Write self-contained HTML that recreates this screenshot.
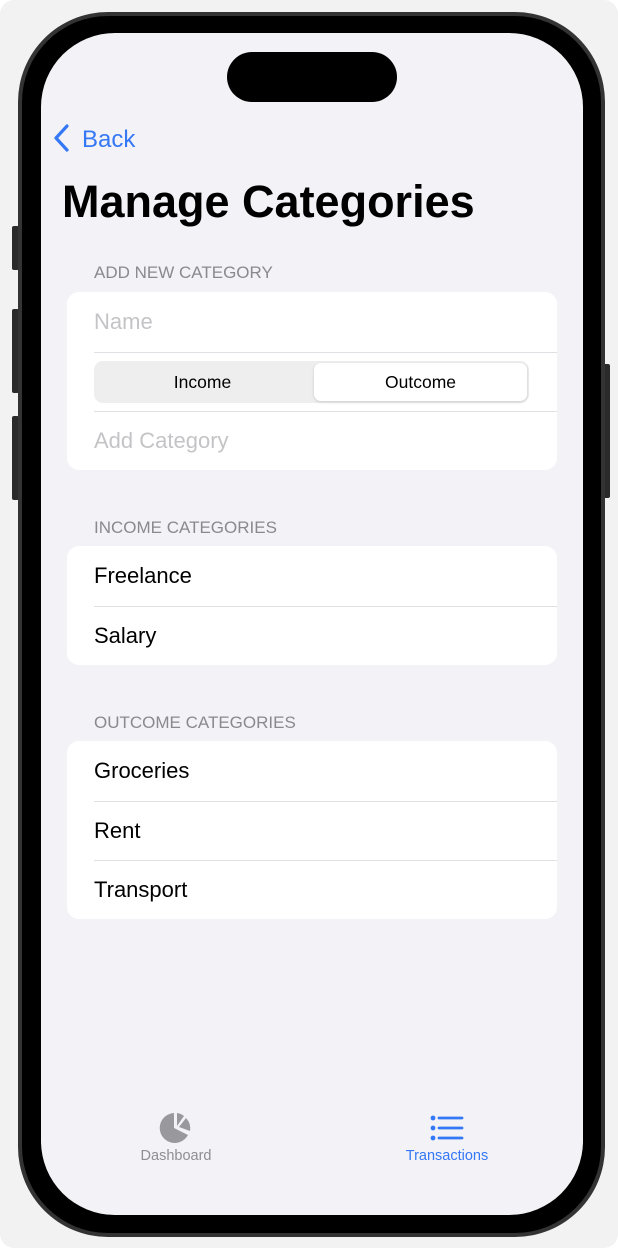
<!DOCTYPE html>
<html><head><meta charset="utf-8"><style>
*{margin:0;padding:0;box-sizing:border-box}
body{width:618px;height:1248px;background:#fff;font-family:"Liberation Sans",sans-serif;position:relative;overflow:hidden}
.bg{position:absolute;left:0;top:0;width:618px;height:1248px;background:#f2f2f2;border-radius:14px}
.btn{position:absolute;background:#2a2a2a;border-radius:2px}
.outer{position:absolute;left:18px;top:12px;width:587px;height:1225px;border-radius:90px;background:#333}
.black{position:absolute;left:22px;top:16px;width:579px;height:1217px;border-radius:86px;background:#000}
.screen{position:absolute;left:41px;top:33px;width:542px;height:1182px;border-radius:74px;background:#f2f2f7;overflow:hidden}
.island{position:absolute;left:186px;top:19px;width:170px;height:50px;border-radius:25px;background:#000}
.back{position:absolute;left:12px;top:91px;color:#3478f6;font-size:24px}
.title{position:absolute;left:21px;top:143px;font-size:45px;font-weight:bold;color:#000;letter-spacing:0px}
.hdr{position:absolute;left:53px;font-size:17px;color:#8a8a8e}
.card{position:absolute;left:26px;width:490px;background:#fff;border-radius:12px}
.row{height:59.5px;line-height:59.5px;padding-left:27px;font-size:22px;color:#000;position:relative}
.row+.row:before{content:"";position:absolute;left:27px;right:0;top:0;height:1px;background:#e0e0e4}
.ph{color:#c4c4c7}
.seg{position:absolute;left:27px;top:9px;width:435px;height:42px;background:#eeeeef;border-radius:9px}
.seg div{position:absolute;top:0;height:42px;line-height:42px;text-align:center;font-size:17.5px;color:#000}
.sel{left:220px;width:213px;top:2px!important;height:38px!important;line-height:38px!important;background:#fff;border-radius:7px;box-shadow:0 1px 3px rgba(0,0,0,.15)}
.tab{position:absolute;font-size:14.5px;text-align:center}
</style></head><body>
<div class="bg"></div>
<div class="btn" style="left:12px;top:226px;width:7px;height:44px"></div>
<div class="btn" style="left:12px;top:309px;width:7px;height:84px"></div>
<div class="btn" style="left:12px;top:416px;width:7px;height:84px"></div>
<div class="btn" style="left:603px;top:364px;width:7px;height:134px"></div>
<div class="outer"></div><div class="black"></div>
<div class="screen">
<div class="island"></div>
<div class="back"><svg width="18" height="28" viewBox="0 0 18 28" style="vertical-align:-5px;margin-right:11px"><path d="M14 2 L3 14 L14 26" fill="none" stroke="#3478f6" stroke-width="3.2" stroke-linecap="round" stroke-linejoin="round"/></svg>Back</div>
<div class="title">Manage Categories</div>
<div class="hdr" style="top:230px">ADD NEW CATEGORY</div>
<div class="card" style="top:259px;height:178px">
<div class="row ph">Name</div>
<div class="row"><div class="seg"><div style="left:0;width:217px">Income</div><div class="sel">Outcome</div></div></div>
<div class="row ph">Add Category</div>
</div>
<div class="hdr" style="top:485px">INCOME CATEGORIES</div>
<div class="card" style="top:513px;height:119px">
<div class="row">Freelance</div><div class="row">Salary</div>
</div>
<div class="hdr" style="top:680px">OUTCOME CATEGORIES</div>
<div class="card" style="top:708px;height:178px">
<div class="row">Groceries</div><div class="row">Rent</div><div class="row">Transport</div>
</div>
<div class="tab" style="left:80px;top:1081px;width:110px;color:#8e8e93">
<svg width="34" height="34" viewBox="0 0 34 34" style="display:block;margin:-3px auto 3px"><path d="M15 2 A15 15 0 1 0 29 24 L15 17 Z" fill="#98989d"/><path d="M18 2 A15 15 0 0 1 25 5 L18 15 Z" fill="#98989d"/><path d="M27 7 A15 15 0 0 1 31 20 L20 16 Z" fill="#98989d"/></svg>Dashboard</div>
<div class="tab" style="left:351px;top:1081px;width:110px;color:#3478f6">
<svg width="34" height="34" viewBox="0 0 34 34" style="display:block;margin:-3px auto 3px"><circle cx="3" cy="7" r="2.4" fill="#3478f6"/><circle cx="3" cy="17" r="2.4" fill="#3478f6"/><circle cx="3" cy="27" r="2.4" fill="#3478f6"/><path d="M9 7H32M9 17H32M9 27H32" stroke="#3478f6" stroke-width="2.8" stroke-linecap="round"/></svg>Transactions</div>
</div>
</body></html>
